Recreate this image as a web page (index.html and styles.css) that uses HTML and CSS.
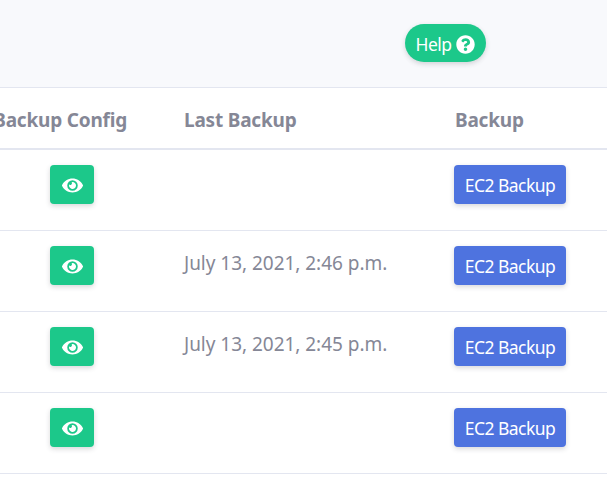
FILE: index.html
```html
<!DOCTYPE html>
<html lang="en">
<head>
<meta charset="utf-8">
<title>Backups</title>
<link rel="stylesheet" href="styles.css">
</head>
<body>
<svg width="0" height="0" class="defs" aria-hidden="true">
<symbol id="eye" viewBox="0 0 576 512"><path fill="currentColor" d="M572.52 241.4C518.29 135.59 410.93 64 288 64S57.68 135.64 3.48 241.41a32.35 32.35 0 0 0 0 29.19C57.71 376.41 165.07 448 288 448s230.32-71.64 284.52-177.41a32.35 32.35 0 0 0 0-29.19zM288 400a144 144 0 1 1 144-144 143.93 143.93 0 0 1-144 144zm0-240a95.31 95.31 0 0 0-25.31 3.79 47.85 47.85 0 0 1-66.9 66.9A95.78 95.78 0 1 0 288 160z"/></symbol>
</svg>
<header class="top">
<button class="btn help"><span>Help</span><svg class="question" viewBox="0 0 512 512"><path fill="currentColor" d="M504 256c0 136.997-111.043 248-248 248S8 392.997 8 256C8 119.083 119.043 8 256 8s248 111.083 248 248zM262.655 90c-54.497 0-89.255 22.957-116.549 63.758-3.536 5.286-2.353 12.415 2.715 16.258l34.699 26.31c5.205 3.947 12.621 3.008 16.665-2.122 17.864-22.658 30.113-35.797 57.303-35.797 20.429 0 45.698 13.148 45.698 32.958 0 14.976-12.363 22.667-32.534 33.976C247.128 238.528 216 254.941 216 296v4c0 6.627 5.373 12 12 12h56c6.627 0 12-5.373 12-12v-1.333c0-28.462 83.186-29.647 83.186-106.667 0-58.002-60.165-102-116.531-102zM256 338c-25.365 0-46 20.635-46 46 0 25.364 20.635 46 46 46s46-20.636 46-46c0-25.364-20.635-46-46-46z"/></svg></button>
</header>
<main class="table">
<div class="row head"><div class="config"><span>Backup Config</span></div><div class="last">Last Backup</div><div class="backup">Backup</div></div>
<div class="row"><div class="config"><button class="btn view"><svg class="eye"><use href="#eye"/></svg></button></div><div class="last"></div><div><button class="btn ec2"><span>EC2 Backup</span></button></div></div>
<div class="row"><div class="config"><button class="btn view"><svg class="eye"><use href="#eye"/></svg></button></div><div class="last">July 13, 2021, 2:46 p.m.</div><div><button class="btn ec2"><span>EC2 Backup</span></button></div></div>
<div class="row"><div class="config"><button class="btn view"><svg class="eye"><use href="#eye"/></svg></button></div><div class="last">July 13, 2021, 2:45 p.m.</div><div><button class="btn ec2"><span>EC2 Backup</span></button></div></div>
<div class="row"><div class="config"><button class="btn view"><svg class="eye"><use href="#eye"/></svg></button></div><div class="last"></div><div><button class="btn ec2"><span>EC2 Backup</span></button></div></div>
</main>
</body>
</html>
```
FILE: styles.css
```css
* { box-sizing: border-box; }
body {
  margin: 0;
  height: 482px;
  overflow: hidden;
  background: #fff;
  color: #858796;
  font-family: "Noto Sans", "Open Sans", sans-serif;
  font-size: 19px;
}
.defs { display: block; }
.top {
  height: 88px;
  padding: 24px 121px 0 0;
  display: flex;
  justify-content: flex-end;
  align-items: flex-start;
  background: #f8f9fc;
  border-bottom: 1px solid #e3e6f0;
}
.btn {
  display: flex;
  align-items: center;
  justify-content: center;
  height: 39px;
  padding: 0;
  border: 0;
  border-radius: 4px;
  color: #fff;
  background: #1cc88a;
  font: inherit;
  font-size: 17.5px;
  letter-spacing: -.55px;
  white-space: nowrap;
  box-shadow: 0 2px 5px rgba(58, 59, 69, .2);
}
.help {
  width: 81px;
  height: 38px;
  gap: 5px;
  padding-top: 2px;
  border-radius: 19px;
}
.question { width: 19px; height: 19px; }
.row {
  display: grid;
  grid-template-columns: 184px 271px 1fr;
  height: 81px;
  padding-top: 15px;
  border-bottom: 1px solid #e3e6f0;
}
.row.head {
  height: 62px;
  padding-top: 18px;
  border-bottom: 2px solid #e3e6f0;
  font-weight: 700;
  line-height: 28px;
  letter-spacing: -.2px;
}
.head .config {
  display: flex;
  justify-content: flex-end;
  width: 127px;
  white-space: nowrap;
}
.view { width: 44px; margin-left: 50px; }
.eye { width: 21px; height: 19px; margin-top: 2px; }
.ec2 { width: 112px; margin-left: -1px; padding-top: 1px; background: #4e73df; }
.last { line-height: 34px; letter-spacing: -.03px; white-space: nowrap; }
.head .last { line-height: 28px; letter-spacing: -.2px; }
```
